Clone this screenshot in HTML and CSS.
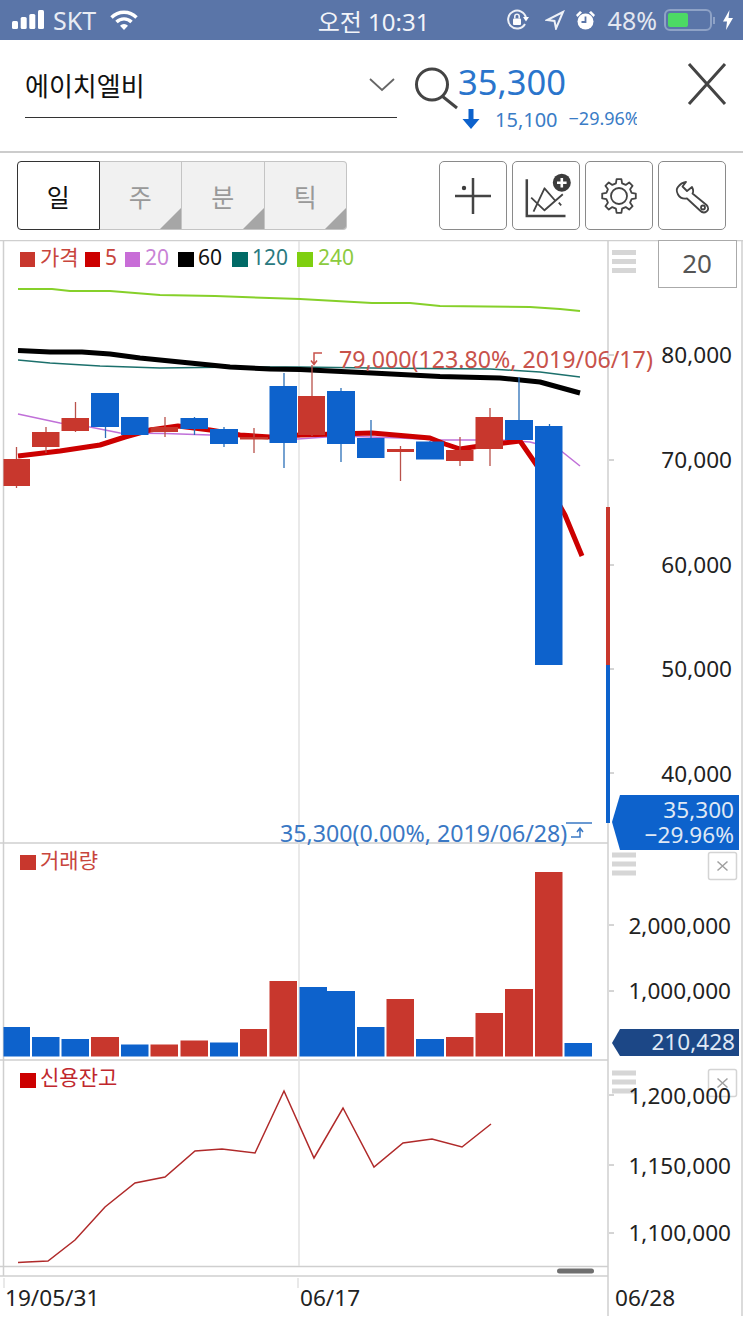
FILE: index.html
```html
<!DOCTYPE html>
<html lang="ko">
<head>
  <meta charset="UTF-8" />
  <meta name="viewport" content="width=device-width, initial-scale=1.0" />
  <title>에이치엘비 차트</title>
  <link rel="stylesheet" href="styles.css">
</head>
<body>
  <!-- Status bar -->
  <div class="statusbar">
    <div class="status-left">
      <svg class="signal" width="34" height="22" viewBox="0 0 34 22">
        <rect x="2" y="12" width="6" height="8" rx="1.5" />
        <rect x="10.7" y="8" width="6" height="12" rx="1.5" />
        <rect x="19.3" y="5" width="6" height="15" rx="1.5" />
        <rect x="28" y="1" width="6" height="19" rx="1.5" />
      </svg>
      <span class="carrier">SKT</span>
      <svg class="wifi" width="28" height="22" viewBox="0 0 28 22">
        <path d="M1.5 8.5a17.5 17.5 0 0 1 25 0" />
        <path d="M6.5 13a10.5 10.5 0 0 1 15 0" />
        <path d="M14 21l-4-4.3a5.5 5.5 0 0 1 8 0z" class="wifi-dot" />
      </svg>
    </div>
    <div class="status-time">오전 10:31</div>
    <div class="status-right">
      <svg width="26" height="24" viewBox="0 0 26 24">
        <path class="line-icon" d="M20 16a9 9 0 1 1 1-6" />
        <path class="solid-icon" d="M18 9h6l-3 4.5z" />
        <rect class="solid-icon" x="8" y="10.5" width="8" height="6.5" rx="1" />
        <path class="line-icon thin" d="M9.8 10.5V8.5a2.2 2.2 0 0 1 4.4 0v2" />
      </svg>
      <svg class="nav-arrow" width="20" height="20" viewBox="0 0 20 20">
        <path class="line-icon" d="M18 2L2 10l7.5 1L11 18.5z" />
      </svg>
      <svg class="alarm" width="21" height="22" viewBox="0 0 21 22">
        <circle class="solid-icon" cx="10.5" cy="12.5" r="8" />
        <path class="solid-icon" d="M1 6l4-4 2 1.5-4.5 4.5zM20 6l-4-4-2 1.5 4.5 4.5z" />
        <path class="clock-hand" d="M10.5 7.5V13h-4" />
      </svg>
      <span class="battery-pct">48%</span>
      <div class="battery"><div class="battery-fill"></div></div>
      <div class="battery-nub"></div>
      <svg width="10" height="20" viewBox="0 0 10 20">
        <path class="solid-icon" d="M6.5 0L0 11.5h4L3 20l7-12H5.5z" />
      </svg>
    </div>
  </div>

  <!-- Header -->
  <div class="header">
    <div class="stock-name">
      <span>에이치엘비</span>
      <svg width="30" height="18" viewBox="0 0 30 18">
        <path d="M4 3l12 11L28 3" />
      </svg>
    </div>
    <svg class="search-icon" width="46" height="46" viewBox="0 0 46 46">
      <circle cx="18" cy="19.5" r="15.5" />
      <path d="M28 31l15 12" />
    </svg>
    <div class="quote">
      <div class="quote-price">35,300</div>
      <div class="quote-change">
        <svg width="20" height="22" viewBox="0 0 20 22">
          <path d="M7.5 1h5v10h6L10 21 1.5 11h6z" />
        </svg>
        <span class="change-value">15,100</span>
        <span class="change-rate">−29.96%</span>
      </div>
    </div>
    <svg class="close-icon" width="40" height="44" viewBox="0 0 40 44">
      <path d="M2 2l36 40M38 2L2 42" />
    </svg>
  </div>

  <!-- Toolbar -->
  <div class="toolbar">
    <div class="periods">
      <button class="period active">일</button>
      <button class="period">주</button>
      <button class="period">분</button>
      <button class="period">틱</button>
    </div>
    <div class="tools">
      <button class="tool">
        <svg width="40" height="40" viewBox="0 0 40 40">
          <path class="tool-line" d="M2 20h36M20 2v36" />
          <circle cx="11" cy="12" r="2.2" class="tool-solid" />
        </svg>
      </button>
      <button class="tool">
        <svg width="50" height="50" viewBox="0 0 50 50">
          <path class="tool-line" d="M5.8 8.3V45H44.5" />
          <path class="tool-thin" d="M10.2 26.7L23.5 39.3 41.8 23.3M12.5 40.7L23.5 17.3 34.5 30M37.8 31.7l2.4 2.6" />
          <circle cx="40.8" cy="11.7" r="9" class="tool-solid" />
          <path class="tool-plus" d="M36 11.7h9.6M40.8 6.9v9.6" />
        </svg>
      </button>
      <button class="tool">
        <svg width="40" height="40" viewBox="-20 -20 40 40">
          <path class="tool-thin" d="M-3.1 -12.6L-2.4 -16.8 2.4 -16.8 3.1 -12.6 6.7 -11.1 10.2 -13.6 13.6 -10.2 11.1 -6.7 12.6 -3.1 16.8 -2.4 16.8 2.4 12.6 3.1 11.1 6.7 13.6 10.2 10.2 13.6 6.7 11.1 3.1 12.6 2.4 16.8 -2.4 16.8 -3.1 12.6 -6.7 11.1 -10.2 13.6 -13.6 10.2 -11.1 6.7 -12.6 3.1 -16.8 2.4 -16.8 -2.4 -12.6 -3.1 -11.1 -6.7 -13.6 -10.2 -10.2 -13.6 -6.7 -11.1z" />
          <circle class="tool-thin" cx="0" cy="0" r="8" />
        </svg>
      </button>
      <button class="tool">
        <svg width="40" height="40" viewBox="0 0 40 40">
          <path class="tool-thin" d="M14 6L10.500 10.500 15 15 20 11C21.500 14 21.500 16 20.500 17.500L34.500 29C37 31.500 36.500 34 34.500 35.500 32.500 37 30 36.500 28 34.500L15 22.500C11 23 7.500 21.500 6 18.500 4.500 15.500 4.500 12.500 6 11 8 8 11 6.500 14 6z" />
          <circle class="tool-thin" cx="31" cy="31.500" r="2" />
        </svg>
      </button>
    </div>
  </div>

  <!-- Chart: coordinates in the viewBox are page pixels -->
  <svg class="chart" width="743" height="1082" viewBox="0 240 743 1082">
    <!-- frame -->
    <path class="frame" d="M3.5 241V1276M608 240V1316M742 240V1316M0 240.5H743" />
    <path class="frame" d="M0 843H608M0 1060H608M0 1266.5H608M0 1276H608" />
    <path class="crosshair" d="M299 241V1266M298 1278V1288M4 1278V1288" />
    <path class="frame-tick" d="M609 355h5M609 460h5M609 565h5M609 669h5M609 773h5M609 925h5M609 991h5M609 1095h5M609 1165h5M609 1233h5" />

    <!-- legend -->
    <rect x="20" y="252" width="15" height="15" fill="#c8372d" />
    <text class="legend" x="40" y="265" fill="#c8453c">가격</text>
    <rect x="85" y="252" width="15" height="15" fill="#cc0000" />
    <text class="legend" x="105" y="265" fill="#c8453c">5</text>
    <rect x="125" y="252" width="15" height="15" fill="#c86dd7" />
    <text class="legend" x="145" y="265" fill="#c983d6">20</text>
    <rect x="178" y="252" width="16" height="15" fill="#000" />
    <text class="legend" x="198" y="265" fill="#111">60</text>
    <rect x="232" y="252" width="16" height="15" fill="#006a66" />
    <text class="legend" x="252" y="265" fill="#2a7a80">120</text>
    <rect x="297" y="252" width="16" height="15" fill="#7fcf10" />
    <text class="legend" x="318" y="265" fill="#8ccb3f">240</text>

    <!-- moving averages -->
    <polyline class="ma ma240" points="18,289 52,289 70,291 110,291 160,295 215,296 300,299 372,303 410,303 440,306 530,307 560,309 580,311" />
    <polyline class="ma ma120" points="18,360 50,363 100,366 160,368 240,367 300,367 372,368 490,369 540,372 580,377" />
    <polyline class="ma ma60" points="18,350.5 50,352 82,352 110,354 140,358 190,363 230,367 270,369 300,369.5 372,373 440,376.5 500,378 540,382 580,393" />
    <polyline class="ma ma20" points="18,414 60,423 90,427 120,433 165,433.5 210,435 250,436 298,439 340,436 400,438 440,440 500,440 530,442 560,450 580,466" />
    <polyline class="ma ma5" points="18,456 60,451 100,445 125,437 150,430 178,426 210,430 240,435 270,437 300,435 372,433 430,438 445,444 460,449 480,446 520,441 540,470 565,515 582,556" />

    <!-- candles -->
    <g class="wick-up">
      <path d="M16.5 447V488M46 427V453M75.5 402V432M165 417V437M254 428V453M312 365V436M400.5 446V481M460 437V466M490 408V466" />
    </g>
    <g class="wick-down">
      <path d="M105.5 427V438M135 417V435M194.5 417V435M224 427V447M284 373V468M341 388V462M371 420V458M430 441V459M519 377V420M549.5 424V430" />
    </g>
    <g class="up">
      <rect x="3.5" y="459" width="26.5" height="27" />
      <rect x="32" y="432" width="27.5" height="15" />
      <rect x="61.5" y="418" width="27.5" height="13" />
      <rect x="150.5" y="427" width="27.5" height="5" />
      <rect x="240" y="437" width="28" height="2.5" />
      <rect x="298" y="396" width="27" height="39" />
      <rect x="387" y="449" width="27" height="3" />
      <rect x="446" y="450" width="27.5" height="11" />
      <rect x="475.5" y="417" width="27.5" height="32" />
    </g>
    <g class="down">
      <rect x="91" y="393" width="28" height="34" />
      <rect x="121" y="417" width="27.5" height="18" />
      <rect x="180.5" y="418" width="27.5" height="11" />
      <rect x="210" y="429" width="28" height="15" />
      <rect x="269.5" y="386" width="27.5" height="57" />
      <rect x="327" y="391" width="28" height="53" />
      <rect x="357" y="438" width="27.5" height="20" />
      <rect x="416" y="441.5" width="28" height="18" />
      <rect x="505" y="420" width="28" height="20" />
      <rect x="535" y="426" width="27.5" height="239" />
    </g>

    <!-- high / low notes -->
    <path class="note-up" d="M322 353h-8v11M311 360.5l3 4 3-4" />
    <text class="note note-high" x="339" y="368">79,000(123.80%, 2019/06/17)</text>
    <text class="note note-low" x="280" y="842">35,300(0.00%, 2019/06/28)</text>
    <path class="note-down" d="M566 823h26M571 837h9v-8M577 832l3-4 3 4" />

    <!-- price range bar -->
    <rect x="606" y="507" width="4" height="158" fill="#c8372d" />
    <rect x="606" y="665" width="4" height="158" fill="#0d62cc" />

    <!-- volume -->
    <g class="down">
      <rect x="3.5" y="1027" width="26.5" height="29.5" />
      <rect x="32" y="1037" width="27.5" height="19.5" />
      <rect x="61.5" y="1039" width="27.5" height="17.5" />
      <rect x="121" y="1044.5" width="27.5" height="12" />
      <rect x="210" y="1042.5" width="28" height="14" />
      <rect x="299.5" y="987" width="27.5" height="69.5" />
      <rect x="327" y="991" width="28" height="65.5" />
      <rect x="357" y="1027" width="27.5" height="29.5" />
      <rect x="416" y="1039" width="28" height="17.5" />
      <rect x="564.5" y="1043" width="27.5" height="13.5" />
    </g>
    <g class="up">
      <rect x="91" y="1037" width="28" height="19.5" />
      <rect x="150.5" y="1044.5" width="27.5" height="12" />
      <rect x="180.5" y="1040.5" width="27.5" height="16" />
      <rect x="240" y="1029" width="27" height="27.5" />
      <rect x="269.5" y="981" width="27.5" height="75.5" />
      <rect x="386.5" y="999" width="27.5" height="57.5" />
      <rect x="446" y="1037" width="27.5" height="19.5" />
      <rect x="475.5" y="1013" width="27.5" height="43.5" />
      <rect x="505" y="989" width="28" height="67.5" />
      <rect x="535" y="872" width="27.5" height="184.5" />
    </g>
    <rect x="20" y="855" width="16" height="15" fill="#c8372d" />
    <text class="legend" x="40" y="868" fill="#c8453c">거래량</text>

    <!-- credit balance -->
    <rect x="20" y="1073" width="16" height="15" fill="#cc0000" />
    <text class="legend" x="40" y="1085" fill="#c0272d">신용잔고</text>
    <polyline class="credit" points="18,1262.5 27,1262 48,1261 75,1240 105,1207 135,1183 165,1177 195,1151 222,1149 255,1153 284,1091 314,1158 343,1108 374,1167 403,1143 432,1139 462,1147 491,1124" />

    <!-- right side controls -->
    <rect class="period-box" x="658.5" y="240.5" width="78" height="47" />
    <text class="period-value" x="697" y="273">20</text>
    <path class="handle" d="M612 252.5h24M612 261.5h24M612 270.5h24M612 855h24M612 864h24M612 873h24M612 1073h24M612 1082h24M612 1091h24" />
    <rect class="pane-close" x="708.5" y="852.5" width="28" height="27" rx="2" />
    <path class="pane-x" d="M717.5 861.5l10 9M727.5 861.5l-10 9" />
    <rect class="pane-close" x="708.5" y="1069.5" width="28" height="27" rx="2" />
    <path class="pane-x" d="M717.5 1078.5l10 9M727.5 1078.5l-10 9" />

    <!-- axis labels -->
    <g class="axis">
      <text x="732" y="363">80,000</text>
      <text x="732" y="468">70,000</text>
      <text x="732" y="573">60,000</text>
      <text x="732" y="677">50,000</text>
      <text x="732" y="782">40,000</text>
      <text x="731" y="934">2,000,000</text>
      <text x="731" y="999">1,000,000</text>
      <text x="731" y="1104">1,200,000</text>
      <text x="731" y="1174">1,150,000</text>
      <text x="731" y="1241">1,100,000</text>
    </g>

    <!-- current value tags -->
    <polygon points="612,822 620,795 739,795 739,850 620,850" fill="#0d62cc" />
    <text class="tag" x="734" y="818">35,300</text>
    <text class="tag" x="734" y="843">−29.96%</text>
    <polygon points="612,1043 620,1029 739,1029 739,1056 620,1056" fill="#1c4786" />
    <text class="tag" x="735" y="1050">210,428</text>

    <!-- scroll thumb and dates -->
    <rect x="557" y="1268.5" width="37" height="5" rx="2.5" fill="#6f6f6f" />
    <g class="dates">
      <text x="5" y="1306">19/05/31</text>
      <text x="300" y="1306">06/17</text>
      <text x="615" y="1306">06/28</text>
    </g>
  </svg>
</body>
</html>
```

FILE: styles.css
```css
* {
  box-sizing: border-box;
}

body {
  font-family: "Noto Sans", "Noto Sans CJK KR", sans-serif;
  background: #fff;
  margin: 0;
  padding: 0;
  color: #333;
  width: 743px;
  height: 1322px;
  overflow: hidden;
}

/* Status bar */
.statusbar {
  display: grid;
  grid-template-columns: 1fr auto 1fr;
  align-items: center;
  height: 40px;
  background: #5a75a8;
  color: #fff;
  font-size: 25px;
  padding: 0 10px;
}

.status-left,
.status-right {
  display: flex;
  align-items: center;
}

.status-left {
  gap: 9px;
}

.status-right {
  justify-content: flex-end;
}

.signal rect {
  fill: #fff;
}

.carrier {
  color: #e8ecf4;
  margin-right: 5px;
}

.status-time {
  color: #f2f4f9;
  font-size: 24px;
  margin-left: 4px;
}

.wifi path {
  fill: none;
  stroke: #fff;
  stroke-width: 3.4;
}

.wifi .wifi-dot {
  fill: #fff;
  stroke: none;
}

.line-icon {
  fill: none;
  stroke: #eef1f7;
  stroke-width: 2;
}

.line-icon.thin {
  stroke-width: 1.6;
}

.solid-icon {
  fill: #fff;
}

.clock-hand {
  fill: none;
  stroke: #5a75a8;
  stroke-width: 1.8;
}

.nav-arrow {
  margin-left: 14px;
}

.alarm {
  margin-left: 10px;
}

.battery-pct {
  color: #e4e8f1;
  margin-left: 12px;
  margin-right: 7px;
}

.battery {
  width: 48px;
  height: 22px;
  border: 2px solid #8ea2c6;
  border-radius: 6px;
  padding: 2px;
}

.battery-fill {
  width: 20px;
  height: 14px;
  background: #4cd964;
  border-radius: 2px;
}

.battery-nub {
  width: 2px;
  height: 7px;
  margin: 0 8px 0 1px;
  background: #8ea2c6;
}

/* Header */
.header {
  display: flex;
  align-items: flex-start;
  height: 113px;
  border-bottom: 2px solid #ccc;
  padding-left: 25px;
  position: relative;
}

.stock-name {
  display: flex;
  justify-content: space-between;
  align-items: center;
  width: 372px;
  height: 78px;
  padding-top: 12px;
  border-bottom: 1.5px solid #333;
  color: #111;
  font-size: 26px;
}

.stock-name svg {
  margin-right: 1px;
}

.stock-name path,
.search-icon circle,
.search-icon path,
.close-icon path {
  fill: none;
  stroke: #444;
}

.stock-name path {
  stroke-width: 1.8;
  stroke: #666;
}

.search-icon {
  margin: 25px 0 0 17px;
  flex: none;
}

.search-icon circle,
.search-icon path {
  stroke-width: 3;
}

.quote {
  margin: 18px 0 0 -2px;
  width: 180px;
  color: #2a75cc;
}

.quote-price {
  font-size: 34.5px;
  line-height: 47px;
  color: #2a75cc;
}

.quote-change {
  display: flex;
  align-items: center;
  height: 30px;
  margin-top: -1px;
  padding-left: 3px;
  color: #3a7cc6;
}

.quote-change path {
  fill: #0d62cc;
}

.change-value {
  font-size: 20px;
  margin-left: 14px;
}

.change-rate {
  font-size: 18px;
  margin: -3px 0 0 11px;
  width: 68px;
  overflow: hidden;
  white-space: nowrap;
}

.close-icon {
  position: absolute;
  left: 687px;
  top: 22px;
}

.close-icon path {
  stroke-width: 3;
}

/* Toolbar */
.toolbar {
  display: flex;
  justify-content: space-between;
  height: 87px;
  padding: 8px 17px 0;
}

.periods,
.tools {
  display: flex;
  height: 69px;
}

.tools {
  gap: 5px;
}

.period {
  position: relative;
  width: 82.5px;
  padding: 0;
  background: #f1f1f1;
  border: 1px solid #c4c4c4;
  border-left: none;
  color: #999;
  font-family: inherit;
  font-size: 25px;
  overflow: hidden;
}

.period:last-child {
  border-radius: 0 4px 4px 0;
}

.period::after {
  content: "";
  position: absolute;
  right: 0;
  bottom: 0;
  border-style: solid;
  border-width: 0 0 21px 21px;
  border-color: transparent transparent #a6a6a6 transparent;
}

.period.active {
  background: #fff;
  border: 1.5px solid #333;
  border-radius: 4px 0 0 4px;
  color: #111;
}

.period.active::after {
  display: none;
}

.tool {
  display: flex;
  align-items: center;
  justify-content: center;
  width: 68px;
  padding: 0;
  background: #fff;
  border: 1.5px solid #8a8a8a;
  border-radius: 5px;
}

.tool-line {
  fill: none;
  stroke: #444;
  stroke-width: 2.5;
}

.tool-thin {
  fill: none;
  stroke: #444;
  stroke-width: 1.8;
  stroke-linejoin: round;
}

.tool-solid {
  fill: #3c3c3c;
}

.tool-plus {
  fill: none;
  stroke: #fff;
  stroke-width: 2.6;
}

/* Chart */
.chart {
  display: block;
}

.frame {
  fill: none;
  stroke: #cfcfcf;
  stroke-width: 1.5;
}

.crosshair {
  fill: none;
  stroke: #e2e2e2;
  stroke-width: 1.5;
}

.frame-tick {
  fill: none;
  stroke: #aaa;
  stroke-width: 1;
}

.legend {
  font-size: 21px;
}

.ma {
  fill: none;
  stroke-linejoin: round;
}

.ma240 {
  stroke: #86d02a;
  stroke-width: 2;
}

.ma120 {
  stroke: #1c706c;
  stroke-width: 1.5;
}

.ma60 {
  stroke: #000;
  stroke-width: 5;
}

.ma20 {
  stroke: #c070d8;
  stroke-width: 1.6;
}

.ma5 {
  stroke: #cc0000;
  stroke-width: 5;
}

.wick-up path {
  fill: none;
  stroke: #b9524b;
  stroke-width: 1.3;
}

.wick-down path {
  fill: none;
  stroke: #2b70b8;
  stroke-width: 1.3;
}

.up rect {
  fill: #c8372d;
}

.down rect {
  fill: #0d62cc;
}

.note {
  font-size: 23.2px;
}

.note-high {
  fill: #c8524b;
}

.note-low {
  fill: #3a78c4;
}

.note-up {
  fill: none;
  stroke: #c8524b;
  stroke-width: 1.5;
}

.note-down {
  fill: none;
  stroke: #3a78c4;
  stroke-width: 1.5;
}

.credit {
  fill: none;
  stroke: #b02a2a;
  stroke-width: 1.5;
}

.period-box {
  fill: #fff;
  stroke: #aaa;
  stroke-width: 1;
}

.period-value {
  fill: #555;
  font-size: 26px;
  text-anchor: middle;
}

.handle {
  fill: none;
  stroke: #d6d6d6;
  stroke-width: 5;
}

.pane-close {
  fill: none;
  stroke: #d4d4d4;
  stroke-width: 1.5;
}

.pane-x {
  fill: none;
  stroke: #a0a0a0;
  stroke-width: 1.5;
}

.axis text {
  fill: #222;
  font-size: 22.6px;
  text-anchor: end;
}

.tag {
  fill: #dfe8f5;
  font-size: 22.6px;
  text-anchor: end;
}

.dates text {
  fill: #222;
  font-size: 22.6px;
}
```
